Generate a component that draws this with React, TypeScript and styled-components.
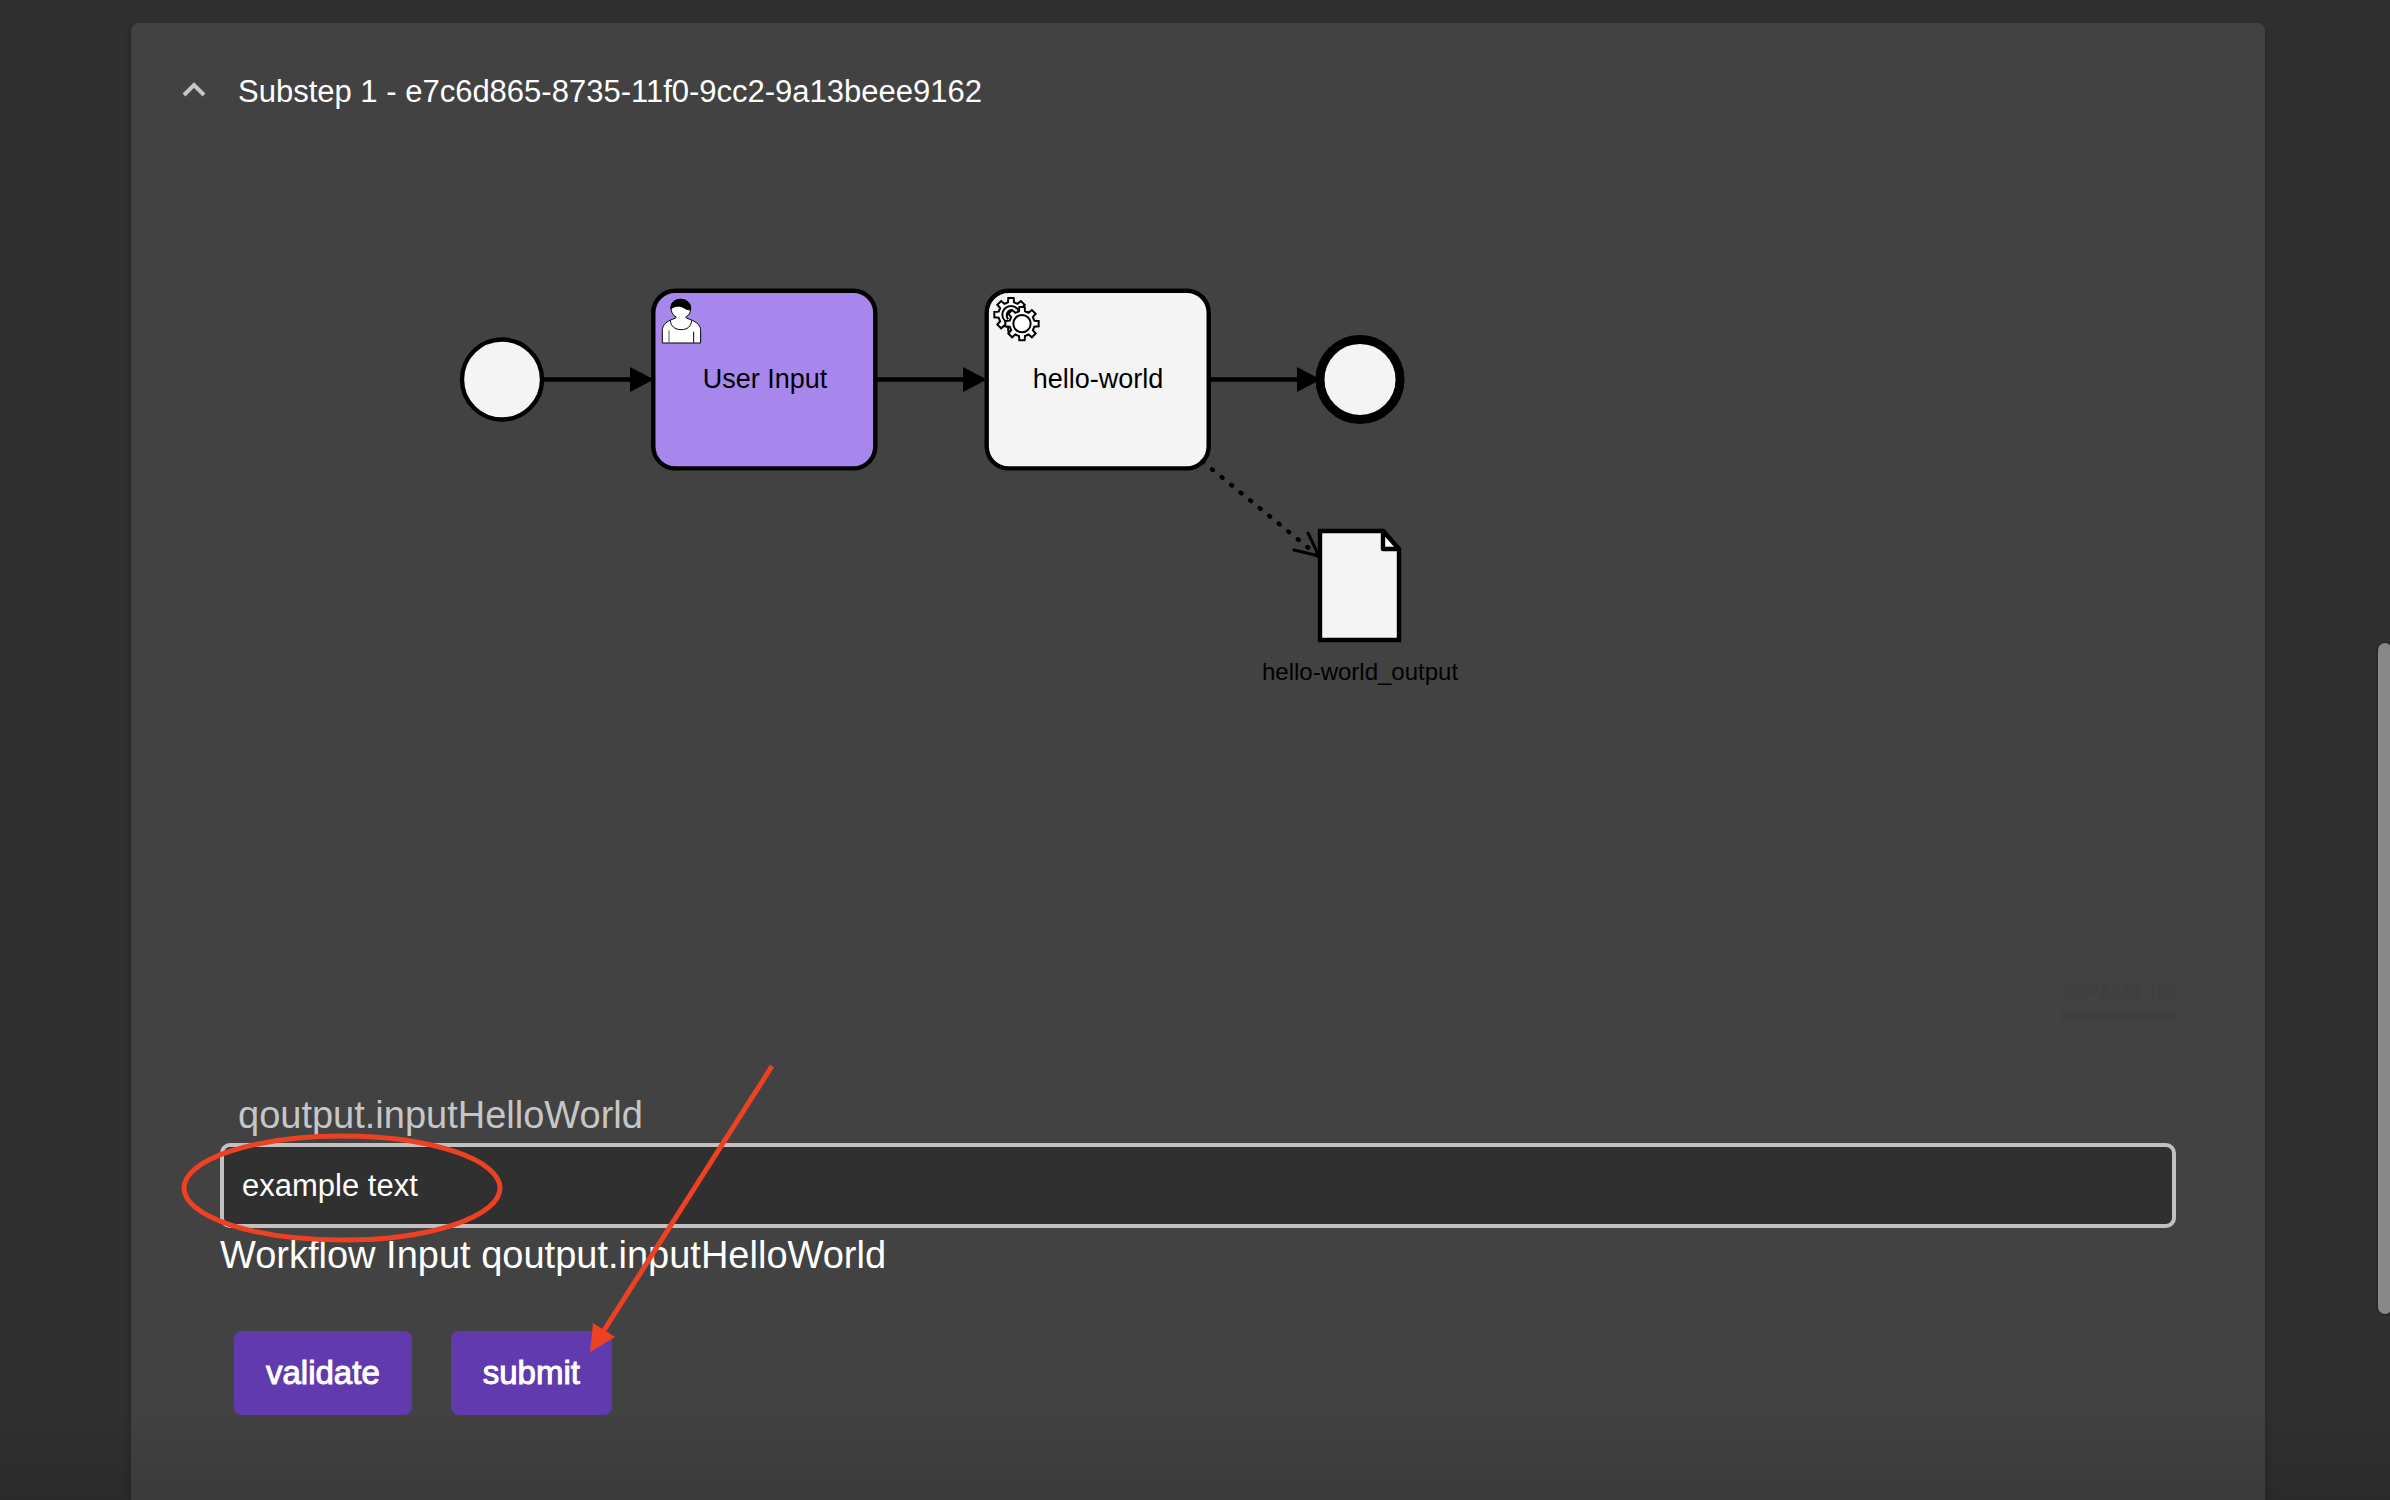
import React from "react";
import styled, { createGlobalStyle } from "styled-components";

const GlobalStyle = createGlobalStyle`
  * { box-sizing: border-box; }
  html, body { margin: 0; background: #303030; }
  body { font-family: "Liberation Sans", Arial, sans-serif; color: #fff; overflow: hidden; }
`;

const Page = styled.main`
  position: relative;
  min-height: 100vh;
  padding: 23px 125px 0 131px;
  display: flex;
  background: #303030;
  overflow: hidden;
  &::after {
    content: "";
    position: absolute;
    left: 0;
    right: 0;
    bottom: 0;
    height: 90px;
    background: linear-gradient(transparent, rgba(0, 0, 0, 0.12));
    pointer-events: none;
  }
`;

const Panel = styled.section`
  flex: 1;
  min-width: 0;
  border-radius: 8px 8px 0 0;
  background: #424242;
  box-shadow: 0 4px 10px rgba(0, 0, 0, 0.28);
`;

const Header = styled.button`
  display: flex;
  align-items: center;
  gap: 32px;
  width: 100%;
  height: 136px;
  padding: 2px 51px 0;
  border: 0;
  background: none;
  color: #fff;
  font: inherit;
  font-size: 31px;
  line-height: 36px;
  text-align: left;
`;

const Chevron = styled.svg`
  width: 24px;
  height: 16px;
  margin-bottom: 6px;
  flex: none;
`;

const Body = styled.div`
  padding: 0 89px;
`;

const Canvas = styled.div`
  position: relative;
  height: 934px;
`;

const Drawing = styled.svg`
  display: block;
  width: 100%;
  height: 900px;
  overflow: visible;
  text { font-size: 27px; text-anchor: middle; fill: #000; }
  text.small { font-size: 24px; }
`;

const Logo = styled.a`
  position: absolute;
  right: -2px;
  bottom: 72px;
  width: 117px;
  height: 48px;
  border-bottom: 9px solid #3f3f3f;
  color: #404040;
  font-size: 27px;
  font-weight: 700;
  line-height: 40px;
  text-decoration: none;
  text-align: center;
`;

const Form = styled.form`
  position: relative;
  display: flex;
  flex-direction: column;
`;

const Label = styled.label`
  padding: 0 18px;
  margin-bottom: 6px;
  color: #c6c6c6;
  font-size: 38px;
  line-height: 44px;
`;

const Field = styled.input`
  width: 100%;
  height: 85px;
  padding: 0 18px;
  border: 4px solid #c2c0c0;
  border-radius: 10px;
  background: #303030;
  color: #fff;
  font-family: inherit;
  font-size: 31px;
  outline: 0;
`;

const Help = styled.p`
  margin: 5px 0 0;
  font-size: 38px;
  line-height: 44px;
`;

const Actions = styled.div`
  display: flex;
  gap: 39px;
  padding: 54px 14px 0;
`;

const Button = styled.button`
  height: 84px;
  padding: 0 32px;
  border: 0;
  border-radius: 8px;
  background: #613aae;
  color: #fff;
  font-family: inherit;
  font-size: 33px;
  -webkit-text-stroke: 1px #fff;
`;

const Marks = styled.svg`
  position: absolute;
  left: 0;
  top: 0;
  width: 600px;
  height: 300px;
  overflow: visible;
  pointer-events: none;
`;

const Thumb = styled.div`
  position: absolute;
  top: 643px;
  right: -2px;
  width: 14px;
  height: 671px;
  border-radius: 7px;
  background: #888;
  box-shadow: 0 0 0 2px #292929;
`;

function gear(cx: number, cy: number) {
  const points: string[] = [];
  for (let i = 0; i < 8; i++) {
    const a = (i * Math.PI) / 4;
    const corners = [[37, -9], [50, -8], [50, 8], [37, 9]];
    corners.forEach(([x, y]) => {
      points.push(
        `${(cx + x * Math.cos(a) - y * Math.sin(a)).toFixed(1)},${(cy + x * Math.sin(a) + y * Math.cos(a)).toFixed(1)}`
      );
    });
  }
  return points.join(" ");
}

function UserIcon() {
  return (
    <g transform="translate(440 270) scale(0.3333)" stroke="#000" strokeWidth="3" fill="#fff">
      <path d="M667 219V182C667 162 682 153 705 145L709 142C698 136 693 124 693 115C693 98 706 88 722 88C739 88 752 98 752 115C752 126 748 136 737 142L741 145C765 153 782 162 782 182V219Z" />
      <path d="M691 151C692 169 705 179 724 179C742 179 754 169 755 151" fill="none" />
      <path d="M687 181V218" stroke="#555" />
      <path d="M761 185V218" />
      <path d="M693 117C691 98 705 88 722 88C740 88 753 99 752 120C745 120 736 117 729 112C716 105 702 109 693 117Z" fill="#000" />
    </g>
  );
}

function GearsIcon() {
  return (
    <g transform="translate(960 270) scale(0.3333)" stroke="#000" strokeWidth="6" fill="#fff">
      <polygon points={gear(153, 134)} />
      <circle cx="153" cy="134" r="26" />
      <path d="M144 148C136 136 142 121 156 119" fill="none" />
      <polygon points={gear(186, 161)} />
      <circle cx="186" cy="161" r="26" />
    </g>
  );
}

function Diagram() {
  return (
    <Drawing role="img" aria-label="Workflow diagram">
      <g transform="translate(-220 -159)" stroke="#000" strokeWidth="4.4">
        <circle cx="502" cy="379.5" r="40" fill="#f4f4f4" />
        <path d="M542 379.5H640M876 379.5H974M1210 379.5H1308" />
        <rect x="653.3" y="290.7" width="222" height="177.7" rx="22" fill="#a787ec" />
        <rect x="986.7" y="290.7" width="222" height="177.7" rx="22" fill="#f4f4f4" />
        <circle cx="1360" cy="379.5" r="40" fill="#f4f4f4" strokeWidth="9" />
        <path d="M630 367L654 379.5L630 392ZM963 367L987 379.5L963 392ZM1297 367L1321 379.5L1297 392Z" fill="#000" stroke="none" />
        <path d="M1202.5 461.5L1319 556.5" strokeDasharray="1.1 11.2" strokeLinecap="round" />
        <path d="M1308 533L1319 556L1294 550" fill="none" strokeWidth="3" strokeLinecap="round" />
        <path d="M1320 531H1383L1399 549V640H1320Z" fill="#f4f4f4" />
        <path d="M1383 531V549H1399Z" fill="#fff" strokeLinejoin="round" />
        <UserIcon />
        <GearsIcon />
        <g stroke="none">
          <text x="765" y="388">User Input</text>
          <text x="1098" y="388">hello-world</text>
          <text className="small" x="1360" y="680">hello-world_output</text>
        </g>
      </g>
    </Drawing>
  );
}

export default function App() {
  return (
    <>
      <GlobalStyle />
      <Page>
        <Panel>
          <Header type="button" aria-expanded="true">
            <Chevron viewBox="0 0 24 16" aria-hidden="true">
              <path d="M2 14L12 4L22 14" fill="none" stroke="#c6c6c6" strokeWidth="4" />
            </Chevron>
            Substep 1 - e7c6d865-8735-11f0-9cc2-9a13beee9162
          </Header>
          <Body>
            <Canvas>
              <Diagram />
              <Logo href="#bpmn">BPMN.iO</Logo>
            </Canvas>
            <Form onSubmit={(e: React.FormEvent) => e.preventDefault()}>
              <Label htmlFor="hello">qoutput.inputHelloWorld</Label>
              <Field id="hello" defaultValue="example text" aria-describedby="hello-help" />
              <Help id="hello-help">Workflow Input qoutput.inputHelloWorld</Help>
              <Actions>
                <Button type="button">validate</Button>
                <Button type="submit">submit</Button>
              </Actions>
              <Marks aria-hidden="true">
                <g transform="translate(-220 -1093)" stroke="#ee4023" fill="none">
                  <ellipse cx="342" cy="1188" rx="158" ry="52" strokeWidth="5" />
                  <path d="M772 1066L603 1332" strokeWidth="5" />
                  <path d="M593 1323L615 1337L590 1352Z" fill="#ee4023" stroke="none" />
                </g>
              </Marks>
            </Form>
          </Body>
        </Panel>
        <Thumb />
      </Page>
    </>
  );
}
